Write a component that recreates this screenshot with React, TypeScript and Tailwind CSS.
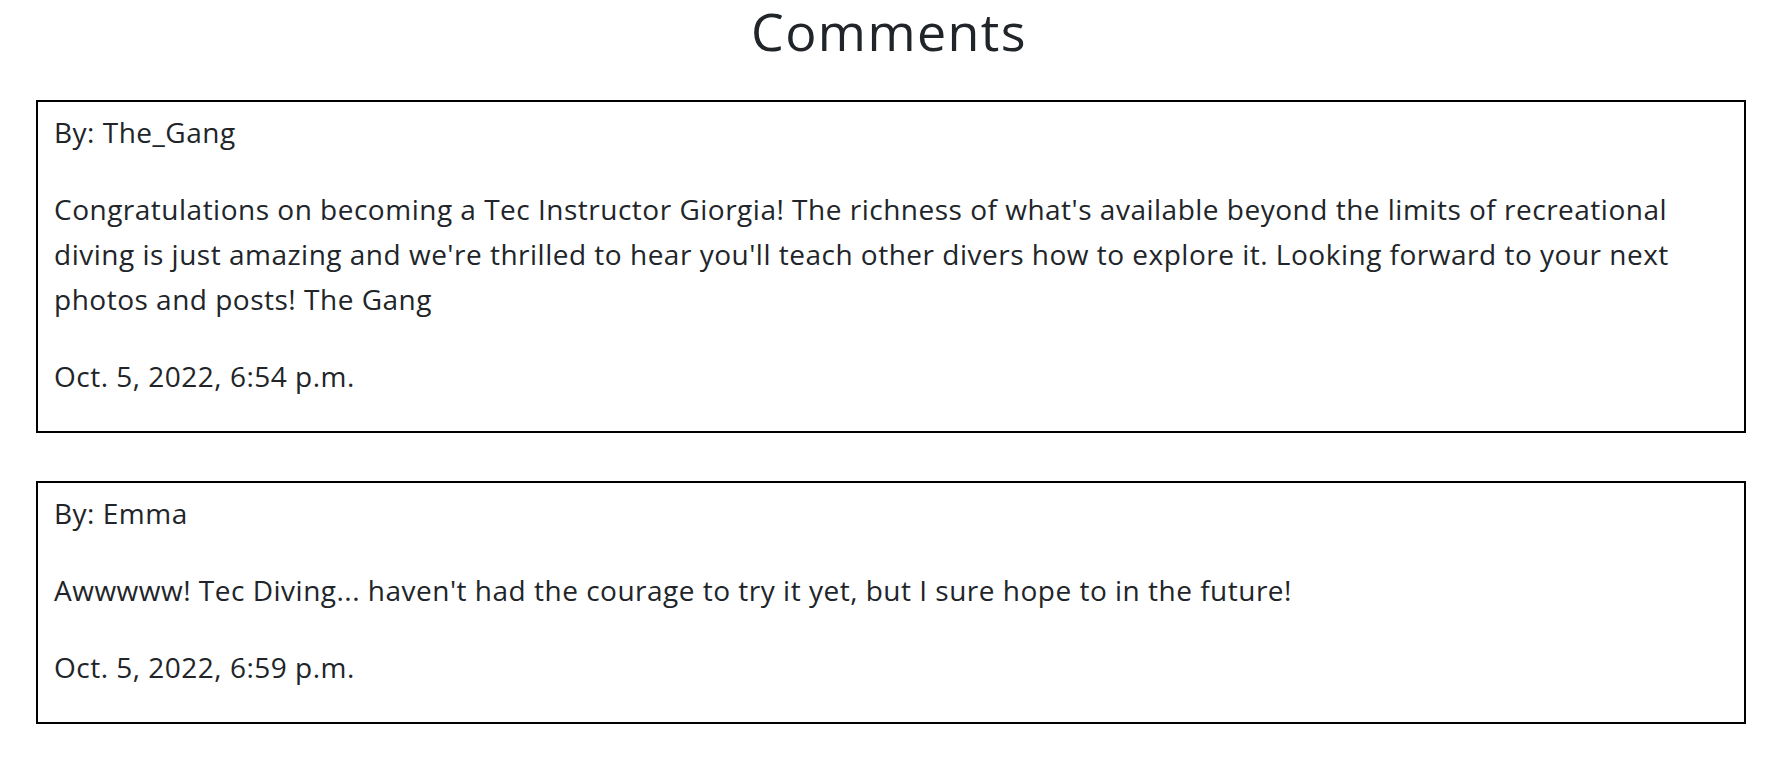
const comments = [
  {
    author: 'The_Gang',
    body:
      "Congratulations on becoming a Tec Instructor Giorgia! The richness of what's available beyond the limits of recreational diving is just amazing and we're thrilled to hear you'll teach other divers how to explore it. Looking forward to your next photos and posts! The Gang",
    date: 'Oct. 5, 2022, 6:54 p.m.',
  },
  {
    author: 'Emma',
    body: "Awwwww! Tec Diving... haven't had the courage to try it yet, but I sure hope to in the future!",
    date: 'Oct. 5, 2022, 6:59 p.m.',
  },
];

export default function App() {
  return (
    <div className="min-h-screen bg-white text-[#212529] font-['Open_Sans',sans-serif]">
      <h1 className="text-center text-[52px] leading-[62px] tracking-[1.4px] pb-[38px]">Comments</h1>
      <div className="ml-[36px] w-[1710px] flex flex-col gap-[48px]">
        {comments.map((c) => (
          <div key={c.date} className="border-2 border-black px-4 pt-[8px] text-[28px] leading-[45px] tracking-[0.5px]">
            <p className="mb-[32px]">By: {c.author}</p>
            <p className="mb-[32px]">{c.body}</p>
            <p className="mb-[32px]">{c.date}</p>
          </div>
        ))}
      </div>
    </div>
  );
}
